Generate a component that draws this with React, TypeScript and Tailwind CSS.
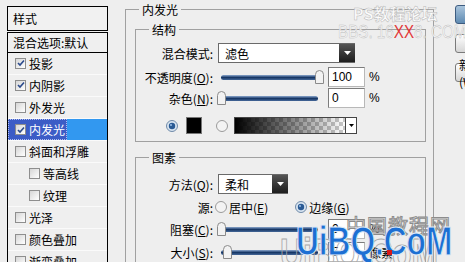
import React from "react";

const effects: { label: string; checked?: boolean; active?: boolean; sub?: boolean }[] = [
  { label: "投影", checked: true },
  { label: "内阴影", checked: true },
  { label: "外发光" },
  { label: "内发光", checked: true, active: true },
  { label: "斜面和浮雕" },
  { label: "等高线", sub: true },
  { label: "纹理", sub: true },
  { label: "光泽" },
  { label: "颜色叠加" },
  { label: "渐变叠加" },
];

function CheckBox({ checked }: { checked?: boolean }) {
  return (
    <span className="flex h-[11px] w-[11px] shrink-0 items-center justify-center border border-[#8e8e8e] bg-gradient-to-br from-[#d6d6d6] to-white">
      {checked && (
        <svg width="8" height="8" viewBox="0 0 8 8">
          <path d="M1 4 L3 6 L7 1.5" fill="none" stroke="#2b4a8c" strokeWidth="1.6" />
        </svg>
      )}
    </span>
  );
}

function Radio({ on }: { on?: boolean }) {
  return (
    <svg width="12" height="12" viewBox="0 0 12 12" className="shrink-0">
      <circle cx="6" cy="6" r="5.5" fill={on ? "#d8e4f0" : "#f3f3f3"} stroke={on ? "#6f8aa8" : "#9a9a9a"} />
      {on && <circle cx="6" cy="6" r="3.2" fill="#2a5a94" />}
      {on && <circle cx="5" cy="5" r="1" fill="#9cc0e8" />}
    </svg>
  );
}

function Thumb({ left }: { left: number }) {
  return (
    <svg width="9" height="14" viewBox="0 0 9 14" className="absolute top-0" style={{ left }}>
      <path d="M0.5 13.5V4.5Q0.5 0.5 4.5 0.5Q8.5 0.5 8.5 4.5V13.5Z" fill="#f2f2f2" stroke="#8a8a8a" />
    </svg>
  );
}

function Slider({ pos }: { pos: number }) {
  return (
    <div className="relative ml-[4px] h-[14px] w-[109px] shrink-0">
      <div className="absolute left-[4px] right-[8px] top-[5px] h-[5px] rounded-full bg-gradient-to-b from-[#8eaad0] via-[#173766] to-[#46699a]" />
      <Thumb left={pos} />
    </div>
  );
}

function DarkArrow() {
  return (
    <span className="flex h-full w-[16px] items-center justify-center bg-gradient-to-b from-[#555] to-[#1e1e1e]">
      <svg width="7" height="4" viewBox="0 0 7 4">
        <path d="M0 0h7L3.5 4z" fill="white" />
      </svg>
    </span>
  );
}

function Select({ value, width }: { value: string; width: number }) {
  return (
    <div
      className="ml-[5px] flex h-[20px] shrink-0 items-center border border-[#6a6a6a] border-r-0 bg-white"
      style={{ width }}
    >
      <span className="flex-1 pl-[6px]">{value}</span>
      <DarkArrow />
    </div>
  );
}

function NumBox({ value }: { value: string }) {
  return (
    <div className="ml-[2px] flex h-[20px] w-[37px] shrink-0 items-center border border-[#b8b8b8] border-l-[#7c7c7c] border-t-[#7c7c7c] bg-white pl-[3px] font-['Liberation_Sans',sans-serif] text-[12px]">
      {value}
    </div>
  );
}

function Label({ children }: { children: React.ReactNode }) {
  return <div className="w-[77px] shrink-0 text-right">{children}</div>;
}

export default function App() {
  return (
    <div className="relative flex h-[262px] w-[465px] items-start overflow-hidden bg-[#eeeeee] font-['Noto_Sans_CJK_SC',sans-serif] text-[12px] leading-[17px] text-black">
      {/* style list */}
      <div className="ml-[7px] mt-[6px] w-[101px] shrink-0">
        <div className="flex h-[25px] items-center border border-black bg-[#f1f1f1] pl-[5px]">样式</div>
        <div className="mt-[1px] h-[240px] border-x border-t border-black bg-[#efefef]">
          <div className="flex h-[20px] items-center border-b border-black pl-[5px]">混合选项:默认</div>
          {effects.map((e) =>
            e.active ? (
              <div key={e.label} className="flex h-[22px] items-center border-b border-[#fafafa] bg-[#3298f0]">
                <span className="flex h-[21px] items-center gap-[3px] border border-dotted border-[#aebcf0] bg-[#3c5cc6] pl-[6px] pr-[1px] text-white">
                  <CheckBox checked={e.checked} />
                  {e.label}
                </span>
              </div>
            ) : (
              <div
                key={e.label}
                className={`flex h-[22px] items-center gap-[3px] border-b border-[#fafafa] pb-[1px] ${e.sub ? "pl-[21px]" : "pl-[7px]"}`}
              >
                <CheckBox checked={e.checked} />
                {e.label}
              </div>
            )
          )}
        </div>
      </div>

      {/* inner glow group */}
      <fieldset className="ml-[17px] mt-[1px] h-[300px] w-[309px] shrink-0 border border-[#a0a0a0]">
        <legend className="ml-[13px] px-[3px] leading-[17px]">内发光</legend>

        <fieldset className="ml-[9px] mt-[3px] w-[291px] border border-[#a0a0a0] pb-[7px]">
          <legend className="ml-[13px] px-[3px] leading-[17px]">结构</legend>
          <div className="mt-[5px] flex h-[20px] items-center">
            <Label>混合模式:</Label>
            <Select value="滤色" width={137} />
          </div>
          <div className="mt-[4px] flex h-[20px] items-center">
            <Label>
              不透明度(<u>O</u>):
            </Label>
            <Slider pos={98} />
            <NumBox value="100" />
            <span className="ml-[4px] font-['Liberation_Sans',sans-serif]">%</span>
          </div>
          <div className="mt-[1px] flex h-[20px] items-center">
            <Label>
              杂色(<u>N</u>):
            </Label>
            <Slider pos={0} />
            <NumBox value="0" />
            <span className="ml-[4px] font-['Liberation_Sans',sans-serif]">%</span>
          </div>
          <div className="mt-[9px] flex h-[17px] items-center">
            <span className="ml-[30px]">
              <Radio on />
            </span>
            <span className="ml-[8px] h-[17px] w-[16px] border border-[#777] bg-black" />
            <span className="ml-[14px]">
              <Radio />
            </span>
            <div className="ml-[6px] flex h-[17px] w-[123px] border border-[#444]">
              <div className="flex-1 bg-[conic-gradient(#c8c8c8_25%,#ffffff_0_50%,#c8c8c8_0_75%,#ffffff_0)] bg-[length:8px_8px]">
                <div className="h-full w-full bg-gradient-to-r from-black to-transparent" />
              </div>
              <span className="flex w-[11px] items-center justify-center border-l border-[#444] bg-white">
                <svg width="5" height="3" viewBox="0 0 5 3">
                  <path d="M0 0h5L2.5 3z" fill="black" />
                </svg>
              </span>
            </div>
          </div>
        </fieldset>

        <fieldset className="ml-[9px] mt-[7px] h-[140px] w-[291px] border border-[#a0a0a0]">
          <legend className="ml-[13px] px-[3px] leading-[17px]">图素</legend>
          <div className="mt-[8px] flex h-[20px] items-center">
            <Label>
              方法(<u>Q</u>):
            </Label>
            <Select value="柔和" width={70} />
          </div>
          <div className="mt-[3px] flex h-[20px] items-center">
            <Label>源:</Label>
            <span className="ml-[2px]">
              <Radio />
            </span>
            <span className="ml-[2px]">
              居中(<u>E</u>)
            </span>
            <span className="ml-[27px]">
              <Radio on />
            </span>
            <span className="ml-[2px]">
              边缘(<u>G</u>)
            </span>
          </div>
          <div className="mt-[2px] flex h-[20px] items-center">
            <Label>
              阻塞(<u>C</u>):
            </Label>
            <Slider pos={0} />
            <NumBox value="0" />
            <span className="ml-[4px] font-['Liberation_Sans',sans-serif]">%</span>
          </div>
          <div className="mt-[3px] flex h-[20px] items-center">
            <Label>
              大小(<u>S</u>):
            </Label>
            <Slider pos={6} />
            <NumBox value="5" />
            <span className="ml-[4px]">像素</span>
          </div>
        </fieldset>
      </fieldset>

      {/* dialog buttons */}
      <div className="ml-[21px] mt-[5px] flex shrink-0 flex-col">
        <div className="flex h-[19px] w-[80px] items-center justify-center rounded-[3px] border border-[#3d5c80] bg-gradient-to-b from-[#a9c4dc] to-[#5f8bb2]">确定</div>
        <div className="mt-[10px] flex h-[19px] w-[80px] items-center justify-center rounded-[3px] border border-[#7a7a7a] bg-gradient-to-b from-white to-[#d6d6d6]">取消</div>
        <div className="mt-[10px] flex h-[19px] w-[80px] items-center rounded-[3px] border border-[#7a7a7a] bg-gradient-to-b from-white to-[#d6d6d6] pl-[3px]">新建样式(W)...</div>
      </div>

      {/* watermarks */}
      <div className="pointer-events-none absolute inset-0">
        <div className="absolute left-[353px] top-[5px] text-[16px] font-bold text-white/80 [-webkit-text-stroke:0.5px_#b8b8b8]">PS教程论坛</div>
        <div className="absolute left-[338px] top-[23px] origin-left scale-x-[0.8] whitespace-nowrap font-['Liberation_Sans',sans-serif] text-[19px] text-white/85 [-webkit-text-stroke:0.5px_#bbbbbb]">
          BBS. 16<span className="text-[#e23a3a] [-webkit-text-stroke:0px]">XX</span>8. COM
        </div>
        <div className="absolute left-[346px] top-[217px] text-[20px] tracking-[1px] text-white/70 [-webkit-text-stroke:1px_#8c8c8c]">中国教程网</div>
        <div className="absolute left-[280px] top-[230px] origin-left scale-x-[0.8] whitespace-nowrap font-['Liberation_Sans',sans-serif] text-[40px] font-bold leading-[46px] text-transparent [-webkit-text-stroke:1px_#a8a8a8]">UiBQ.CoM</div>
        <div className="absolute left-[296px] top-[218px] origin-left scale-x-[0.79] whitespace-nowrap font-['Liberation_Sans',sans-serif] text-[40px] font-bold leading-[46px] text-[#1d6fd3] [-webkit-text-stroke:1px_#dfe9f5]">UiBQ.CoM</div>
        <div className="absolute left-[387px] top-[250px] h-[5px] w-[5px] bg-[#d81818]" />
      </div>
    </div>
  );
}
